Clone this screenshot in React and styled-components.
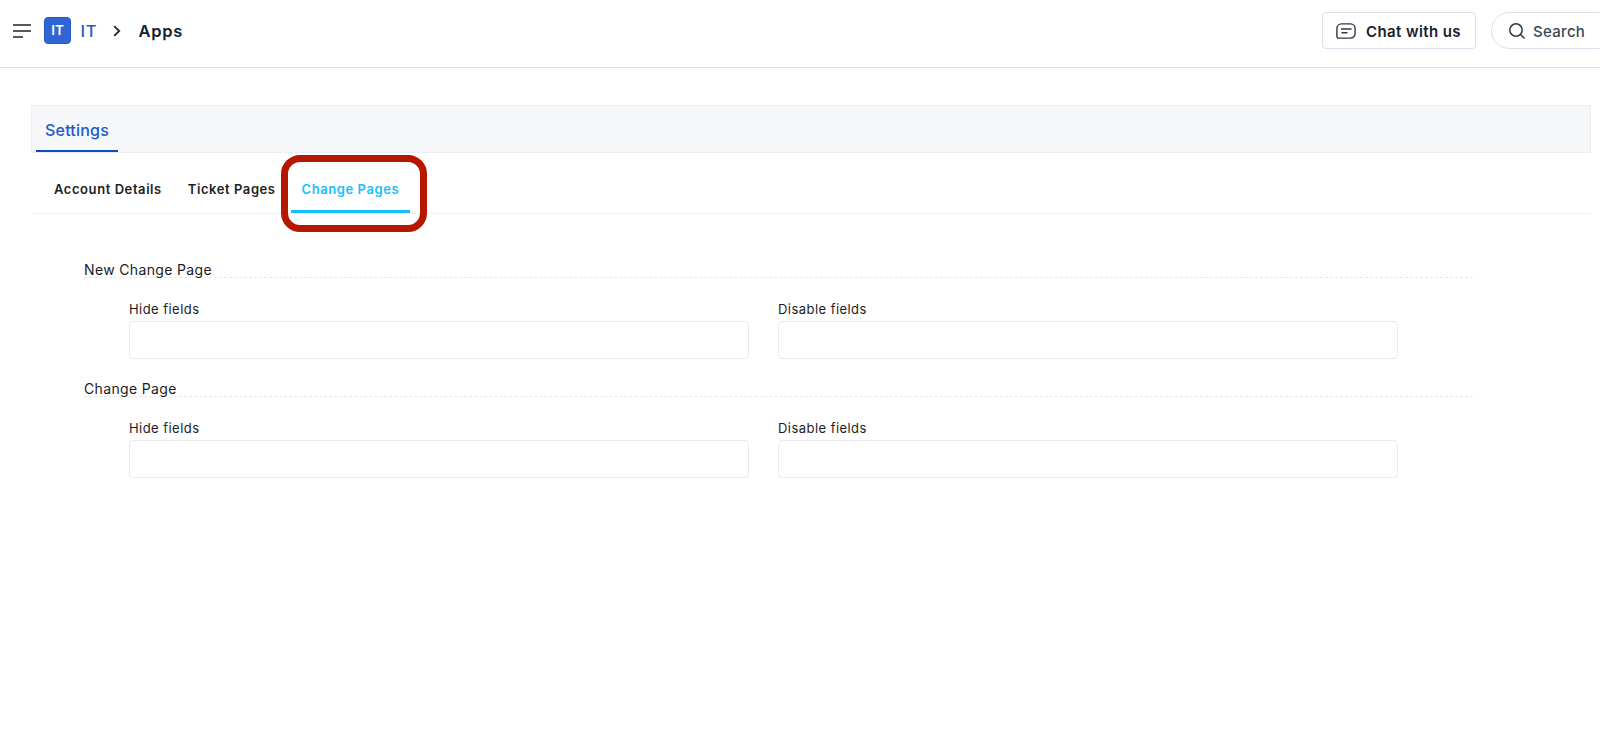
import styled, { createGlobalStyle } from 'styled-components';

const SECTIONS = [
  { title: 'New Change Page', fields: ['Hide fields', 'Disable fields'] },
  { title: 'Change Page', fields: ['Hide fields', 'Disable fields'] },
];

export default function App() {
  return (
    <>
      <GlobalStyle />
      <Header>
        <MenuIcon viewBox="0 0 18 14">
          <path d="M0 1h18M0 7h18M0 13h10" />
        </MenuIcon>
        <Logo>IT</Logo>
        <CrumbLink href="#">IT</CrumbLink>
        <ChevronIcon viewBox="0 0 8 12">
          <path d="M1.2 1.2 6.2 6l-5 4.8" />
        </ChevronIcon>
        <Crumb>Apps</Crumb>
        <ChatButton>
          <ChatIcon viewBox="0 0 20 16">
            <path d="M5.5.9h9a4.6 4.6 0 0 1 4.6 4.6v5a4.6 4.6 0 0 1-4.6 4.6H2.4A1.5 1.5 0 0 1 .9 13.6V5.5A4.6 4.6 0 0 1 5.5.9z" />
            <path d="M5 6h10.5M5.500 9.800h6" />
          </ChatIcon>
          Chat with us
        </ChatButton>
        <SearchButton>
          <SearchIcon viewBox="0 0 16 16">
            <circle cx="7" cy="7" r="6.2" />
            <path d="m11.5 11.5 4 4" />
          </SearchIcon>
          Search
        </SearchButton>
      </Header>

      <Main>
        <SettingsBar>
          <SettingsTab>Settings</SettingsTab>
        </SettingsBar>
        <Tabs>
          <Tab>Account Details</Tab>
          <Tab>Ticket Pages</Tab>
          <Tab $active>
            Change Pages
            <Highlight />
          </Tab>
        </Tabs>

        <Form>
          {SECTIONS.map((section) => (
            <Section key={section.title}>
              <SectionTitle>{section.title}</SectionTitle>
              <Fields>
                {section.fields.map((label) => (
                  <Field key={label}>
                    <Label>{label}</Label>
                    <Input />
                  </Field>
                ))}
              </Fields>
            </Section>
          ))}
        </Form>
      </Main>
    </>
  );
}

const GlobalStyle = createGlobalStyle`
  * {
    box-sizing: border-box;
  }

  body {
    margin: 0;
    height: 732px;
    overflow: hidden;
    background: #fff;
    color: #1c1c1e;
    font-family: Inter, 'Liberation Sans', sans-serif;
  }
`;

const Header = styled.header`
  display: flex;
  align-items: center;
  height: 68px;
  padding: 0 0 6px 12.5px;
  border-bottom: 1px solid #d9e2ea;
  overflow: hidden;
`;

const Icon = styled.svg`
  flex: none;
  fill: none;
  stroke: #2f3a48;
  stroke-width: 1.4;
`;

const MenuIcon = styled(Icon)`
  width: 18px;
  height: 14px;
  stroke: #222;
  stroke-width: 1.4;
`;

const Logo = styled.div`
  display: flex;
  align-items: center;
  justify-content: center;
  flex: none;
  width: 27px;
  height: 27px;
  margin-left: 13.7px;
  padding-bottom: 1px;
  border: 1px solid #2258d0;
  border-radius: 4px;
  background: #2f66d3;
  color: #fff;
  font-size: 13.5px;
  font-weight: 600;
`;

const CrumbLink = styled.a`
  margin-left: 9.3px;
  width: 24px;
  padding-top: 1px;
  color: #2059ce;
  font-size: 16.5px;
  font-weight: 500;
  letter-spacing: 0.7px;
  text-decoration: none;
`;

const ChevronIcon = styled(Icon)`
  width: 8px;
  height: 12px;
  margin-left: 9px;
  stroke: #1f2a37;
  stroke-width: 1.8;
`;

const Crumb = styled.span`
  margin-left: 17px;
  padding-top: 1px;
  color: #17212e;
  font-size: 16.5px;
  font-weight: 600;
  letter-spacing: 0.75px;
`;

const ChatButton = styled.button`
  display: flex;
  align-items: center;
  flex: none;
  gap: 10px;
  width: 154px;
  height: 37px;
  margin-left: auto;
  padding: 1px 0 0 13px;
  border: 1px solid #d9e2ea;
  border-radius: 4px;
  background: #fff;
  color: #17212e;
  font: 600 15px Inter, sans-serif;
  letter-spacing: 0.4px;
  white-space: nowrap;
`;

const ChatIcon = styled(Icon)`
  width: 20px;
  height: 16px;
`;

const SearchButton = styled.button`
  display: flex;
  align-items: center;
  flex: none;
  gap: 8px;
  width: 125px;
  height: 37px;
  margin: 0 -16px 0 15px;
  padding: 1px 0 0 17px;
  border: 1px solid #d9e2ea;
  border-radius: 19px;
  background: #fff;
  color: #3b4655;
  font: 500 15px Inter, sans-serif;
  letter-spacing: 0.3px;
`;

const SearchIcon = styled(Icon)`
  width: 16px;
  height: 16px;
  margin-top: -1px;
  stroke-width: 1.5;
`;

const Main = styled.main`
  padding: 37px 9px 0 31px;
`;

const SettingsBar = styled.div`
  display: flex;
  height: 48px;
  padding: 0 4px;
  border: 1px solid #ebeef2;
  background: #f5f7f9;
`;

const SettingsTab = styled.div`
  width: 82px;
  padding: 14px 0 0 9px;
  border-bottom: 2px solid #0d4bc4;
  color: #2059ce;
  font-size: 16px;
  font-weight: 500;
  letter-spacing: 0.2px;
  line-height: 20px;
`;

const Tabs = styled.nav`
  display: flex;
  height: 61px;
  padding-left: 12px;
  border-bottom: 1px solid #eff1f4;
`;

const Tab = styled.div`
  position: relative;
  height: 60px;
  margin-right: 4px;
  padding: 26px 11px 0;
  border-bottom: 3px solid ${(props) => (props.$active ? '#16c0fa' : 'transparent')};
  color: ${(props) => (props.$active ? '#16c0fa' : '#222')};
  font-size: 13px;
  font-weight: 600;
  letter-spacing: 0.57px;
  line-height: 20px;
  white-space: nowrap;
`;

const Highlight = styled.div`
  position: absolute;
  top: 2px;
  left: -10px;
  width: 146px;
  height: 77px;
  border: 7px solid #b51700;
  border-radius: 19px;
  pointer-events: none;
`;

const Form = styled.form`
  width: 1389px;
  margin: 46px 0 0 53px;
`;

const Section = styled.section`
  height: 119px;
`;

const SectionTitle = styled.h3`
  height: 18px;
  margin: 0;
  border-bottom: 1px dashed #e8e6f6;
  font-size: 14px;
  font-weight: 400;
  letter-spacing: 0.35px;
  line-height: 20px;
`;

const Fields = styled.div`
  display: grid;
  grid-template-columns: 620px 620px;
  gap: 29px;
  padding: 21px 0 0 45px;
`;

const Field = styled.label`
  display: block;
`;

const Label = styled.span`
  display: block;
  height: 22px;
  font-size: 13px;
  letter-spacing: 0.45px;
  line-height: 20px;
`;

const Input = styled.input`
  display: block;
  width: 100%;
  height: 38px;
  border: 1px solid #e6ebec;
  border-radius: 4px;
  background: #fff;
`;
